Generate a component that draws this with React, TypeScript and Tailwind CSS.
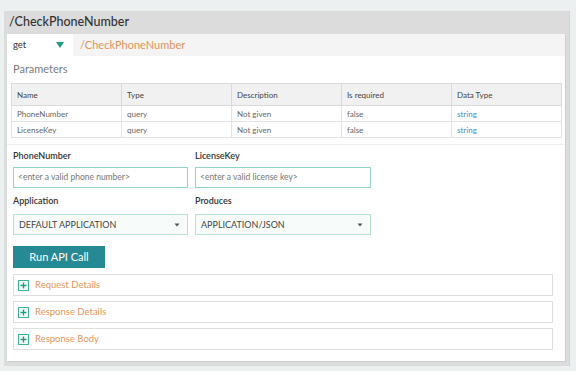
import React from "react";

const cols = ["Name", "Type", "Description", "Is required", "Data Type"];
const rows = [
  ["PhoneNumber", "query", "Not given", "false", "string"],
  ["LicenseKey", "query", "Not given", "false", "string"],
];

function Caret() {
  return (
    <svg width="6" height="4" viewBox="0 0 6 4" className="shrink-0">
      <polygon points="0.5,0.5 5.5,0.5 3,3.5" fill="#555" />
    </svg>
  );
}

function PlusBox() {
  return (
    <svg width="11" height="11" viewBox="0 0 11 11" className="shrink-0">
      <rect x="0.5" y="0.5" width="10" height="10" fill="#f2fbf8" stroke="#3fb196" strokeWidth="1" />
      <rect x="4.8" y="2.5" width="1.4" height="6" fill="#1f9c7e" />
      <rect x="2.5" y="4.8" width="6" height="1.4" fill="#1f9c7e" />
    </svg>
  );
}

export default function App() {
  return (
    <div className="w-[576px] h-[371px] bg-[#edf0f1] pt-[11px] pl-[4px] pr-[6px] pb-[5px] font-['Lato','Noto_Sans',sans-serif] text-[#555]">
      <div className="h-full flex flex-col bg-[#dcdcdc] border-r border-[#d4d4d4] pb-[5px] pr-[4px]">
        <div className="h-[23px] pl-[5px] flex items-center text-[12.5px] font-medium text-[#333] leading-none">
          /CheckPhoneNumber
        </div>
        <div className="ml-[3px] flex-1 bg-white flex flex-col shadow-[1px_1px_0_#cccccc]">
          {/* get row */}
          <div className="h-[22px] flex">
            <div className="w-[66px] flex items-center justify-between pl-[6px] pr-[9px] bg-white">
              <span className="text-[9.5px] text-[#333]">get</span>
              <svg width="8" height="6" viewBox="0 0 8 6">
                <polygon points="0,0 8,0 4,6" fill="#1f9c7e" />
              </svg>
            </div>
            <div className="flex-1 bg-[#f4f4f4] flex items-center pl-[7px] text-[11px] text-[#e3935a]">
              /CheckPhoneNumber
            </div>
          </div>
          {/* Parameters */}
          <div className="h-[27px] flex items-center pl-[6px] text-[11px] text-[#7a7a7a]">Parameters</div>
          <div className="pl-[4px]">
            <table className="w-[550px] border-collapse table-fixed text-[8px] text-[#555]">
              <thead>
                <tr className="h-[22px] bg-[#f1f1f1]">
                  {cols.map((c) => (
                    <th key={c} className="w-[110px] border border-[#d9d9d9] text-left font-normal pl-[5px] text-[#444]">
                      {c}
                    </th>
                  ))}
                </tr>
              </thead>
              <tbody>
                {rows.map((r, i) => (
                  <tr key={i} className="h-[16px]">
                    {r.map((v, j) => (
                      <td
                        key={j}
                        className={
                          j === 4
                            ? "border border-[#e2e2e2] pl-[5px] text-[#4a8bc9]"
                            : "border border-[#e2e2e2] pl-[5px] text-[#666]"
                        }
                      >
                        {v}
                      </td>
                    ))}
                  </tr>
                ))}
              </tbody>
            </table>
          </div>
          <div className="mt-[6px] border-t border-[#eeeeee]" />
          {/* form */}
          <div className="pl-[6px] grid grid-cols-[175px_176px] gap-x-[7px]">
            <div className="h-[22px] flex items-center text-[9px] font-semibold text-[#333]">PhoneNumber</div>
            <div className="h-[22px] flex items-center text-[9px] font-semibold text-[#333]">LicenseKey</div>
            <div className="h-[21px] border border-[#92d5c7] flex items-center pl-[4px] text-[8.5px] text-[#777]">
              &lt;enter a valid phone number&gt;
            </div>
            <div className="h-[21px] border border-[#92d5c7] flex items-center pl-[4px] text-[8.5px] text-[#777]">
              &lt;enter a valid license key&gt;
            </div>
            <div className="h-[26px] flex items-center text-[9px] font-semibold text-[#333]">Application</div>
            <div className="h-[26px] flex items-center text-[9px] font-semibold text-[#333]">Produces</div>
            <div className="h-[21px] border border-[#b5e3d9] bg-[#f7fcfb] flex items-center justify-between pl-[5px] pr-[7px] text-[9px] text-[#444]">
              <span>DEFAULT APPLICATION</span>
              <Caret />
            </div>
            <div className="h-[21px] border border-[#b5e3d9] bg-[#f7fcfb] flex items-center justify-between pl-[5px] pr-[7px] text-[9px] text-[#444]">
              <span>APPLICATION/JSON</span>
              <Caret />
            </div>
          </div>
          <div className="pl-[6px] mt-[11px]">
            <div className="w-[92px] h-[22px] bg-[#268a94] flex items-center justify-center text-[11px] text-white">
              Run API Call
            </div>
          </div>
          <div className="pl-[6px] pr-[12px] mt-[6px] flex flex-col gap-[5px]">
            {["Request Details", "Response Details", "Response Body"].map((t) => (
              <div key={t} className="h-[22px] border border-[#dedede] flex items-center gap-[6px] pl-[4px] text-[9.5px] text-[#e8965a]">
                <PlusBox />
                <span>{t}</span>
              </div>
            ))}
          </div>
        </div>
      </div>
    </div>
  );
}
